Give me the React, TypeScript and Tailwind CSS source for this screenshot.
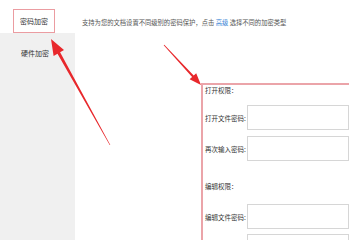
const font = { fontFamily: '"Noto Sans CJK SC", "Noto Sans", sans-serif' };

function PwdRow({ label, className = "" }: { label: string; className?: string }) {
  return (
    <div className={`flex items-center ${className}`}>
      <span className="w-[42px] shrink-0 text-[6.5px] leading-[8px] text-[#333] whitespace-nowrap">
        {label}
      </span>
      <div className="h-[25px] w-[102px] shrink-0 border border-[#d6d6d6] bg-white" />
    </div>
  );
}

function Arrows() {
  return (
    <svg className="pointer-events-none absolute inset-0" width="349" height="240" viewBox="0 0 349 240">
      {/* arrow to the tab */}
      <polygon
        fill="#e8282c"
        points="51,39 64,50.1 60.1,52.3 110.3,145 109.7,145 57.5,53.7 53.6,55.9"
      />
      {/* arrow to the form */}
      <polygon
        fill="#e8282c"
        points="201,85 196.2,73.2 193.7,75.5 164.3,44.8 163.7,45.2 192.1,76.9 189.6,79.2"
      />
    </svg>
  );
}

export default function App() {
  return (
    <div className="relative flex h-[240px] w-[349px] overflow-hidden bg-white" style={font}>
      {/* Sidebar */}
      <div className="flex w-[75px] shrink-0 flex-col">
        <div className="h-[33px] bg-white px-[13px] pt-[9px]">
          <div className="flex h-[24px] w-[42px] items-center justify-center border border-[#eb9ca1] text-[7px] text-[#333]">
            密码加密
          </div>
        </div>
        <div className="flex-1 bg-[#f0f0f0] pl-[21px] pt-[15px] text-[7px] leading-[10px] text-[#333]">
          硬件加密
        </div>
      </div>

      {/* Main */}
      <div className="flex flex-1 flex-col">
        <p className="whitespace-nowrap pl-[7px] pt-[18px] text-[6.3px] leading-[9px] text-[#555]">
          支持为您的文档设置不同级别的密码保护，点击 <span className="text-[#3b86d6]">高级</span> 选择不同的加密类型
        </p>

        <div className="ml-[126px] mt-[56px] w-[170px] flex-1 border-l-2 border-t-2 border-[#eba4a9] pl-[2px]">
          <div className="pt-px text-[6.5px] leading-[8px] text-[#333]">打开权限：</div>
          <PwdRow label="打开文件密码:" className="mt-[11px]" />
          <PwdRow label="再次输入密码:" className="mt-[6px]" />
          <div className="mt-[21px] text-[6.5px] leading-[8px] text-[#333]">编辑权限：</div>
          <PwdRow label="编辑文件密码:" className="mt-[14px]" />
          <PwdRow label="再次输入密码:" className="mt-[5px]" />
        </div>
      </div>

      <Arrows />
    </div>
  );
}
